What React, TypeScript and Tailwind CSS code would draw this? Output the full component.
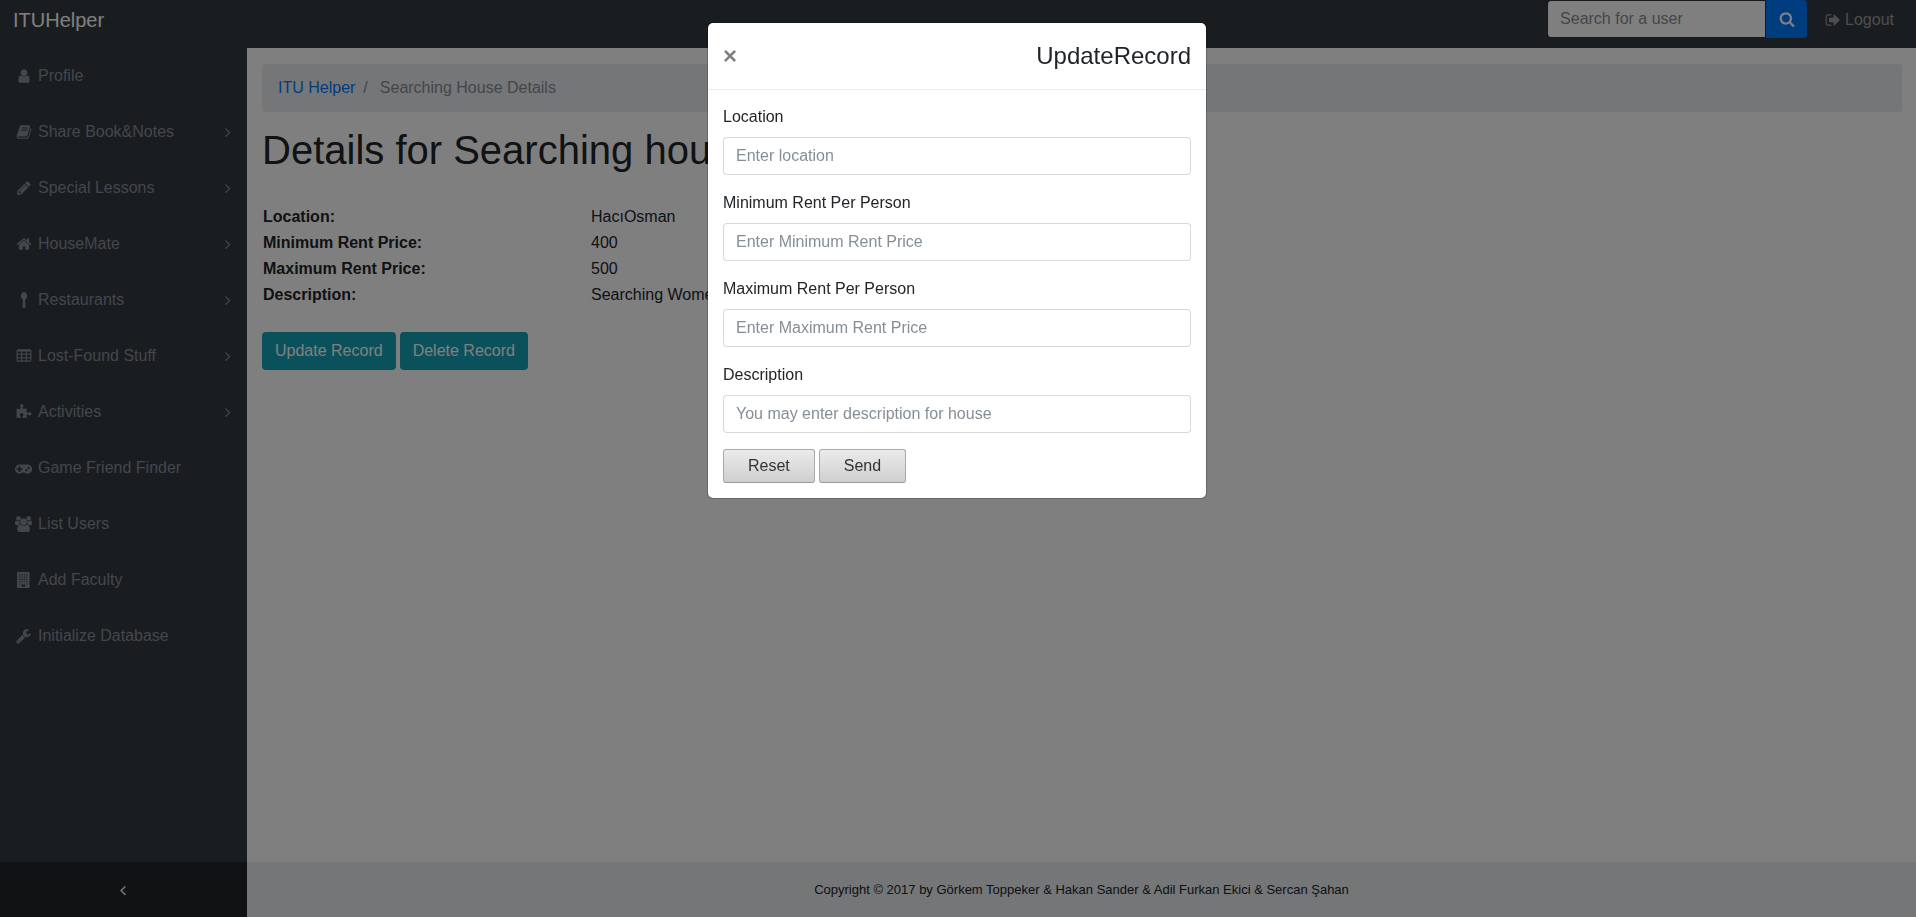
import React, { useState } from "react";

type Glyph = { width: number; flip?: boolean; bold?: boolean; d: string };

const glyphs: Record<string, Glyph> = {
  user: {
    width: 1792,
    d: "M1536 1399q0 109-62.5 187t-150.5 78h-854q-88 0-150.5-78t-62.5-187q0-85 8.5-160.5t31.5-152 58.5-131 94-89 134.5-34.5q131 128 313 128t313-128q76 0 134.5 34.5t94 89 58.5 131 31.5 152 8.5 160.5zm-256-887q0 159-112.5 271.5t-271.5 112.5-271.5-112.5-112.5-271.5 112.5-271.5 271.5-112.5 271.5 112.5 112.5 271.5z",
  },
  book: {
    width: 1792,
    d: "M1703 478q40 57 18 129l-275 906q-19 64-76.5 107.5t-122.5 43.5h-923q-77 0-148.5-53.5t-99.5-131.5q-24-67-2-127 0-4 3-27t4-37q1-8-3-21.5t-3-19.5q2-11 8-21t16.5-23.5 16.5-23.5q23-38 45-91.5t30-91.5q3-10 .5-30t-.5-28q3-11 17-28t17-23q21-36 42-92t25-90q1-9-2.5-32t.5-28q4-13 22-30.5t22-22.5q19-26 42.5-84.5t27.5-96.5q1-8-3-25.5t-2-26.5q2-8 9-18t18-23 17-21q8-12 16.5-30.5t15-35 16-36 19.5-32 26.5-23.5 36-11.5 47.5 5.5l-1 3q38-9 51-9h761q74 0 114 56t18 130l-274 906q-36 119-71.5 153.5t-128.5 34.5h-869q-27 0-38 15-11 16-1 43 24 70 144 70h923q29 0 56-15.5t35-41.5l300-987q7-22 5-57 38 15 59 43zm-1064 2q-4 13 2 22.5t20 9.5h608q13 0 25.5-9.5t16.5-22.5l21-64q4-13-2-22.5t-20-9.5h-608q-13 0-25.5 9.5t-16.5 22.5zm-83 256q-4 13 2 22.5t20 9.5h608q13 0 25.5-9.5t16.5-22.5l21-64q4-13-2-22.5t-20-9.5h-608q-13 0-25.5 9.5t-16.5 22.5z",
  },
  pencil: {
    width: 1792,
    d: "M491 1536l91-91-235-235-91 91v107h128v128h107zm523-928q0-22-22-22-10 0-17 7l-542 542q-7 7-7 17 0 22 22 22 10 0 17-7l542-542q7-7 7-17zm-54-192l416 416-832 832h-416v-416zm683 96q0 53-37 90l-166 166-416-416 166-165q36-38 90-38 53 0 91 38l235 234q37 39 37 91z",
  },
  home: {
    width: 1792,
    d: "M1472 992v480q0 26-19 45t-45 19h-384v-384h-256v384h-384q-26 0-45-19t-19-45v-480q0-1 .5-3t.5-3l575-474 575 474q1 2 1 6zm223-69l-62 74q-8 9-21 11h-3q-13 0-21-7l-692-577-692 577q-12 8-24 7-13-2-21-11l-62-74q-8-10-7-23.5t11-21.5l719-599q32-26 76-26t76 26l244 204v-195q0-14 9-23t23-9h192q14 0 23 9t9 23v408l219 182q10 8 11 21.5t-7 23.5z",
  },
  spoon: {
    width: 1792,
    d: "M1248 480q0 150-68 255t-172 150l58 760q4 60-34 103t-94 44h-84q-56 0-94-44t-34-103l58-760q-104-45-172-150t-68-255q0-125 46-236t124-177.5 182-66.5 182 66.5 124 177.5 46 236z",
  },
  table: {
    width: 1792,
    d: "M224 128h1344q66 0 113 47t47 113v1088q0 66-47 113t-113 47h-1344q-66 0-113-47t-47-113v-1088q0-66 47-113t113-47zM192 416v192q0 32 32 32h320q32 0 32-32v-192q0-32-32-32h-320q-32 0-32 32zM704 416v192q0 32 32 32h320q32 0 32-32v-192q0-32-32-32h-320q-32 0-32 32zM1216 416v192q0 32 32 32h320q32 0 32-32v-192q0-32-32-32h-320q-32 0-32 32zM192 800v192q0 32 32 32h320q32 0 32-32v-192q0-32-32-32h-320q-32 0-32 32zM704 800v192q0 32 32 32h320q32 0 32-32v-192q0-32-32-32h-320q-32 0-32 32zM1216 800v192q0 32 32 32h320q32 0 32-32v-192q0-32-32-32h-320q-32 0-32 32zM192 1184v192q0 32 32 32h320q32 0 32-32v-192q0-32-32-32h-320q-32 0-32 32zM704 1184v192q0 32 32 32h320q32 0 32-32v-192q0-32-32-32h-320q-32 0-32 32zM1216 1184v192q0 32 32 32h320q32 0 32-32v-192q0-32-32-32h-320q-32 0-32 32z",
  },
  puzzle: {
    width: 1792,
    d: "M1728 1098q0 81-44.5 135t-123.5 54q-41 0-77.5-17.5t-59-38-56.5-38-71-17.5q-110 0-110 124 0 39 16 115t15 115v5q-22 0-33 1-34 3-97.5 11.5t-115.5 13.5-98 5q-61 0-103-26.5t-42-83.5q0-37 17.5-71t38-56.5 38-59 17.5-77.5q0-79-54-123.5t-135-44.5q-84 0-143 45.5t-59 127.5q0 43 15 83t33.5 64.5 33.5 53 15 50.5q0 45-46 89-37 35-117 35-95 0-245-24-9-2-27.5-4t-27.5-4l-13-2q-1 0-3-1-2 0-2-1v-1024q2 1 17.5 3.5t34 5 21.5 3.5q150 24 245 24 80 0 117-35 46-44 46-89 0-22-15-50.5t-33.5-53-33.5-64.5-15-83q0-82 59-127.5t144-45.5q80 0 134 44.5t54 123.5q0 41-17.5 77.5t-38 59-38 56.5-17.5 71q0 57 42 83.5t103 26.5q64 0 180-15t163-17v2q-1 2-3.5 17.5t-5 34-3.5 21.5q-24 150-24 245 0 80 35 117 44 46 89 46 22 0 50.5-15t53-33.5 64.5-33.5 83-15q82 0 127.5 59t45.5 143z",
  },
  gamepad: {
    width: 1920,
    flip: true,
    d: "M832 448v128q0 14-9 23t-23 9h-192v192q0 14-9 23t-23 9h-128q-14 0-23-9t-9-23v-192h-192q-14 0-23-9t-9-23v-128q0-14 9-23t23-9h192v-192q0-14 9-23t23-9h128q14 0 23 9t9 23v192h192q14 0 23 9t9 23zM1408 384q0 53-37.5 90.5t-90.5 37.5t-90.5-37.5t-37.5-90.5t37.5-90.5t90.5-37.5t90.5 37.5t37.5 90.5zM1664 640q0 53-37.5 90.5t-90.5 37.5t-90.5-37.5t-37.5-90.5t37.5-90.5t90.5-37.5t90.5 37.5t37.5 90.5zM1920 512q0-212-150-362t-362-150q-192 0-338 128h-220q-146-128-338-128q-212 0-362 150t-150 362t150 362t362 150h896q212 0 362-150t150-362z",
  },
  users: {
    width: 1920,
    flip: true,
    d: "M593 640q-162-5-265-128h-134q-82 0-138 40.5t-56 118.5q0 353 124 353q6 0 43.5-21t97.5-42.5t119-21.5q67 0 133 23q-5-37-5-66q0-139 81-256zM1664 3q0-120-73-189.5t-194-69.5h-874q-121 0-194 69.5t-73 189.5q0 53 3.5 103.5t14 109t26.5 108.5t43 97.5t62 81t85.5 53.5t111.5 20q10 0 43-21.5t73-48t107-48t135-21.5t135 21.5t107 48t73 48t43 21.5q61 0 111.5-20t85.5-53.5t62-81t43-97.5t26.5-108.5t14-109t3.5-103.5zM640 1280q0-106-75-181t-181-75t-181 75t-75 181t75 181t181 75t181-75t75-181zM1344 896q0-159-112.5-271.5t-271.5-112.5t-271.5 112.5t-112.5 271.5t112.5 271.5t271.5 112.5t271.5-112.5t112.5-271.5zM1920 671q0-78-56-118.5t-138-40.5h-134q-103 123-265 128q81 117 81 256q0 29-5 66q66-23 133-23q59 0 119 21.5t97.5 42.5t43.5 21q124 0 124-353zM1792 1280q0-106-75-181t-181-75t-181 75t-75 181t75 181t181 75t181-75t75-181z",
  },
  building: {
    width: 1536,
    d: "M64 0h1280q26 0 45 19t19 45v1664q0 26-19 45t-45 19h-1280q-26 0-45-19t-19-45v-1664q0-26 19-45t45-19zM256 256v128h128v-128zM512 256v128h128v-128zM768 256v128h128v-128zM1024 256v128h128v-128zM256 512v128h128v-128zM512 512v128h128v-128zM768 512v128h128v-128zM1024 512v128h128v-128zM256 768v128h128v-128zM512 768v128h128v-128zM768 768v128h128v-128zM1024 768v128h128v-128zM256 1024v128h128v-128zM512 1024v128h128v-128zM768 1024v128h128v-128zM1024 1024v128h128v-128zM256 1280v128h128v-128zM1024 1280v128h128v-128zM544 1408q-32 0-32 32v192q0 32 32 32h320q32 0 32-32v-192q0-32-32-32z",
  },
  wrench: {
    width: 1664,
    flip: true,
    d: "M384 64q0 26-19 45t-45 19t-45-19t-19-45t19-45t45-19t45 19t19 45zM1028 484l-682-682q-37-37-90-37q-52 0-91 37l-106 108q-38 36-38 90q0 53 38 91l681 681q39-98 114.5-173.5t173.5-114.5zM1662 919q0-39-23-106q-47-134-164.5-217.5t-258.5-83.5q-185 0-316.5 131.5t-131.5 316.5t131.5 316.5t316.5 131.5q58 0 121.5-16.5t107.5-46.5q16-11 16-28t-16-28l-293-169v-224l193-107q5 3 79 48.5t135.5 81t70.5 35.5q15 0 23.5-10t8.5-25z",
  },
  search: {
    width: 1792,
    d: "M1216 832q0-185-131.5-316.5t-316.5-131.5-316.5 131.5-131.5 316.5 131.5 316.5 316.5 131.5 316.5-131.5 131.5-316.5zm512 832q0 52-38 90t-90 38q-54 0-90-38l-343-342q-179 124-399 124-143 0-273.5-55.5t-225-150-150-225-55.5-273.5 55.5-273.5 150-225 225-150 273.5-55.5 273.5 55.5 225 150 150 225 55.5 273.5q0 220-124 399l343 343q37 37 37 90z",
  },
  signOut: {
    width: 1792,
    d: "M704 1440q0 4 1 20t.5 26.5-3 23.5-10 19.5-20.5 6.5h-320q-119 0-203.5-84.5t-84.5-203.5v-704q0-119 84.5-203.5t203.5-84.5h320q13 0 22.5 9.5t9.5 22.5q0 4 1 20t.5 26.5-3 23.5-10 19.5-20.5 6.5h-320q-66 0-113 47t-47 113v704q0 66 47 113t113 47h312l11.5 1 11.5 3 8 5.5 7 9 2 13.5zm928-544q0 26-19 45l-544 544q-19 19-45 19t-45-19-19-45v-288h-448q-26 0-45-19t-19-45v-384q0-26 19-45t45-19h448v-288q0-26 19-45t45-19 45 19l544 544q19 19 19 45z",
  },
  angleRight: {
    width: 640,
    flip: true,
    d: "M595 576q0-13-10-23l-466-466q-10-10-23-10t-23 10l-50 50q-10 10-10 23t10 23l393 393l-393 393q-10 10-10 23t10 23l50 50q10 10 23 10t23-10l466-466q10-10 10-23z",
  },
  angleLeft: {
    width: 768,
    flip: true,
    bold: true,
    d: "M45 576q0-13 10-23l466-466q10-10 23-10t23 10l50 50q10 10 10 23t-10 23l-393 393l393 393q10 10 10 23t-10 23l-50 50q-10 10-23 10t-23-10l-466-466q-10-10-10-23z",
  },
};

function Icon({ name }: { name: string }) {
  const glyph = glyphs[name];
  return (
    <svg
      viewBox={`0 0 ${glyph.width} 1792`}
      className="h-4 w-auto shrink-0"
      fill="currentColor"
      fillRule="evenodd"
      stroke={glyph.bold ? "currentColor" : "none"}
      strokeWidth={glyph.bold ? 70 : 0}
      aria-hidden="true"
    >
      <path d={glyph.d} transform={glyph.flip ? "translate(0 1536) scale(1 -1)" : undefined} />
    </svg>
  );
}

const navItems = [
  { icon: "user", label: "Profile" },
  { icon: "book", label: "Share Book&Notes", expandable: true },
  { icon: "pencil", label: "Special Lessons", expandable: true },
  { icon: "home", label: "HouseMate", expandable: true },
  { icon: "spoon", label: "Restaurants", expandable: true },
  { icon: "table", label: "Lost-Found Stuff", expandable: true },
  { icon: "puzzle", label: "Activities", expandable: true },
  { icon: "gamepad", label: "Game Friend Finder" },
  { icon: "users", label: "List Users" },
  { icon: "building", label: "Add Faculty" },
  { icon: "wrench", label: "Initialize Database" },
];

const details = [
  ["Location:", "HacıOsman"],
  ["Minimum Rent Price:", "400"],
  ["Maximum Rent Price:", "500"],
  ["Description:", "Searching Women"],
];

const fields = [
  { id: "location", label: "Location", placeholder: "Enter location" },
  { id: "min-rent", label: "Minimum Rent Per Person", placeholder: "Enter Minimum Rent Price" },
  { id: "max-rent", label: "Maximum Rent Per Person", placeholder: "Enter Maximum Rent Price" },
  { id: "description", label: "Description", placeholder: "You may enter description for house" },
];

function TopBar() {
  return (
    <header className="flex h-12 justify-between bg-[#343a40] pr-[22px] pl-[13px]">
      <a href="#" className="h-10 text-xl leading-10 text-white">
        ITUHelper
      </a>
      <div className="flex items-start gap-[18px]">
        <form className="flex" onSubmit={(e) => e.preventDefault()}>
          <input
            type="text"
            aria-label="Search for a user"
            placeholder="Search for a user"
            className="h-[38px] w-[219px] rounded-l border border-black/15 bg-white bg-clip-padding px-3 text-[#495057] placeholder:text-[#868e96]"
          />
          <button
            type="submit"
            aria-label="Search"
            className="flex h-[38px] w-[41px] items-center justify-center rounded-r bg-[#007bff] text-white"
          >
            <Icon name="search" />
          </button>
        </form>
        <a href="#" className="flex h-10 items-center gap-1 text-white/50">
          <Icon name="signOut" />
          Logout
        </a>
      </div>
    </header>
  );
}

function Sidebar() {
  return (
    <aside className="flex w-[247px] shrink-0 flex-col bg-[#343a40]">
      <nav className="flex-1">
        <ul>
          {navItems.map((item) => (
            <li key={item.label}>
              <a href="#" className="flex items-center gap-1 py-4 pr-4 pl-[13px] text-[#868e96]">
                <span className="flex w-[21px] justify-center">
                  <Icon name={item.icon} />
                </span>
                <span className="flex-1">{item.label}</span>
                {item.expandable && <Icon name="angleRight" />}
              </a>
            </li>
          ))}
        </ul>
      </nav>
      <button
        type="button"
        aria-label="Collapse sidebar"
        className="flex h-[55px] items-center justify-center bg-[#212529] text-[#dee2e6]"
      >
        <Icon name="angleLeft" />
      </button>
    </aside>
  );
}

function UpdateDialog({ onClose }: { onClose: () => void }) {
  const greyButton =
    "h-[34px] rounded-[3px] border border-[#aaaaaa] border-b-[#999999] bg-linear-to-b from-[#ebebeb] to-[#cfcfcf] px-6 text-[#333333]";
  return (
    <div className="fixed inset-0 overflow-y-auto bg-black/50 pr-0.5">
      <div
        role="dialog"
        aria-modal="true"
        aria-labelledby="dialog-title"
        className="mx-auto mt-[22px] w-[500px] rounded-md border border-black/20 bg-white bg-clip-padding"
      >
        <div className="flex items-center justify-between border-b border-[#e9ecef] p-[15px]">
          <button
            type="button"
            aria-label="Close"
            onClick={onClose}
            className="text-2xl leading-6 font-bold text-black/50"
          >
            ×
          </button>
          <h4 id="dialog-title" className="text-2xl leading-9">
            UpdateRecord
          </h4>
        </div>
        <form className="flex flex-col gap-4 p-[15px]" onSubmit={(e) => e.preventDefault()}>
          {fields.map((field) => (
            <div key={field.id} className="flex flex-col gap-2">
              <label htmlFor={field.id}>{field.label}</label>
              <input
                id={field.id}
                type="text"
                placeholder={field.placeholder}
                className="h-[38px] rounded border border-black/15 bg-white px-3 text-[#495057] placeholder:text-[#868e96]"
              />
            </div>
          ))}
          <div className="flex gap-1">
            <button type="reset" className={greyButton}>
              Reset
            </button>
            <button type="submit" className={greyButton}>
              Send
            </button>
          </div>
        </form>
      </div>
    </div>
  );
}

export default function App() {
  const [open, setOpen] = useState(true);
  const infoButton = "h-[38px] rounded bg-[#17a2b8] px-[13px] text-white";
  return (
    <div className="flex min-h-screen flex-col bg-white font-['Liberation_Sans',Arial,sans-serif] text-base text-[#212529]">
      <TopBar />
      <div className="flex flex-1">
        <Sidebar />
        <div className="flex min-w-0 flex-1 flex-col">
          <main className="flex-1 pt-4 pr-[14px] pl-[15px]">
            <nav aria-label="Breadcrumb" className="rounded bg-[#e9ecef] px-4 py-3">
              <ol className="flex gap-2 text-[#868e96]">
                <li>
                  <a href="#" className="text-[#007bff]">
                    ITU Helper
                  </a>
                </li>
                <li aria-hidden="true">/</li>
                <li className="pl-1">Searching House Details</li>
              </ol>
            </nav>
            <h1 className="mt-4 text-[40px] leading-[44px]">Details for Searching house</h1>
            <table className="mt-8 w-full table-fixed text-left">
              <tbody>
                {details.map(([name, value]) => (
                  <tr key={name}>
                    <th scope="row" className="w-1/5 p-px font-bold">
                      {name}
                    </th>
                    <td className="p-px">{value}</td>
                  </tr>
                ))}
              </tbody>
            </table>
            <div className="mt-6 flex gap-1">
              <button type="button" className={infoButton} onClick={() => setOpen(true)}>
                Update Record
              </button>
              <button type="button" className={infoButton}>
                Delete Record
              </button>
            </div>
          </main>
          <footer className="flex h-[55px] items-center justify-center bg-[#e9ecef] text-[13px]">
            Copyright © 2017 by Görkem Toppeker &amp; Hakan Sander &amp; Adil Furkan Ekici &amp; Sercan Şahan
          </footer>
        </div>
      </div>
      {open && <UpdateDialog onClose={() => setOpen(false)} />}
    </div>
  );
}
